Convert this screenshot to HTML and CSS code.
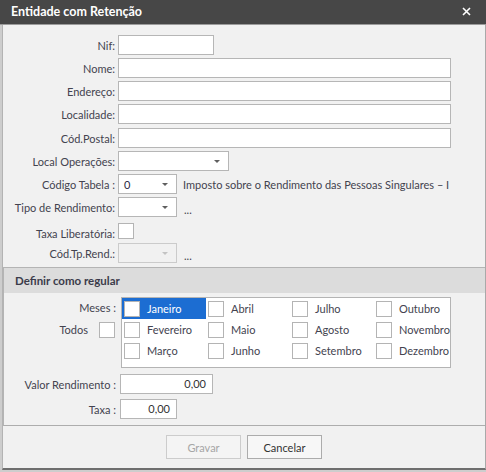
FILE: index.html
```html
<!DOCTYPE html>
<html lang="pt">
<head>
    <meta charset="UTF-8">
    <title>Entidade com Retenção</title>
    <link rel="stylesheet" href="styles.css">
</head>
<body>

    <div class="titlebar">
        <span class="title">Entidade com Retenção</span>
        <svg class="close" width="9" height="9" viewBox="0 0 9 9">
            <path d="M1 1 L8 8 M8 1 L1 8" stroke="#fff" stroke-width="1.6"/>
        </svg>
    </div>

    <div class="frame">
        <div class="fields">
            <div class="row">
                <span class="lbl">Nif:</span>
                <div class="input w-nif"></div>
            </div>
            <div class="row">
                <span class="lbl">Nome:</span>
                <div class="input w-full"></div>
            </div>
            <div class="row">
                <span class="lbl">Endereço:</span>
                <div class="input w-full"></div>
            </div>
            <div class="row row-extra">
                <span class="lbl">Localidade:</span>
                <div class="input w-full"></div>
            </div>
            <div class="row">
                <span class="lbl">Cód.Postal:</span>
                <div class="input w-full"></div>
            </div>
            <div class="row">
                <span class="lbl">Local Operações:</span>
                <div class="input select w-local"><span></span><i class="arrow"></i></div>
            </div>
            <div class="row">
                <span class="lbl">Código Tabela :</span>
                <div class="input select w-small"><span class="val">0</span><i class="arrow"></i></div>
                <span class="after">Imposto sobre o Rendimento das Pessoas Singulares – I</span>
            </div>
            <div class="row">
                <span class="lbl">Tipo de Rendimento:</span>
                <div class="input select w-small"><span></span><i class="arrow"></i></div>
                <span class="after dots">...</span>
            </div>
            <div class="row row-check">
                <span class="lbl">Taxa Liberatória:</span>
                <span class="check"></span>
            </div>
            <div class="row">
                <span class="lbl">Cód.Tp.Rend.:</span>
                <div class="input select w-small disabled"><span></span><i class="arrow"></i></div>
                <span class="after dots">...</span>
            </div>
        </div>

        <div class="group">
            <div class="group-head">Definir como regular</div>
            <div class="group-body">
                <div class="months-row">
                    <div class="months-side">
                        <div class="meses">Meses :</div>
                        <div class="todos"><span>Todos</span><span class="check"></span></div>
                    </div>
                    <div class="months">
                        <div class="month selected"><span class="check"></span>Janeiro</div>
                        <div class="month"><span class="check"></span>Abril</div>
                        <div class="month"><span class="check"></span>Julho</div>
                        <div class="month"><span class="check"></span>Outubro</div>
                        <div class="month"><span class="check"></span>Fevereiro</div>
                        <div class="month"><span class="check"></span>Maio</div>
                        <div class="month"><span class="check"></span>Agosto</div>
                        <div class="month"><span class="check"></span>Novembro</div>
                        <div class="month"><span class="check"></span>Março</div>
                        <div class="month"><span class="check"></span>Junho</div>
                        <div class="month"><span class="check"></span>Setembro</div>
                        <div class="month"><span class="check"></span>Dezembro</div>
                    </div>
                </div>
                <div class="vrow vrow-first">
                    <span class="vlbl">Valor Rendimento :</span>
                    <div class="input num w-valor">0,00</div>
                </div>
                <div class="vrow">
                    <span class="vlbl">Taxa :</span>
                    <div class="input num w-taxa">0,00</div>
                </div>
            </div>
        </div>

        <div class="footer">
            <button class="btn" disabled>Gravar</button>
            <button class="btn">Cancelar</button>
        </div>
    </div>

</body>
</html>
```

FILE: styles.css
```css
* {
    box-sizing: border-box;
}

body {
    margin: 0;
    width: 486px;
    height: 472px;
    overflow: hidden;
    background-color: #cdcdcd;
    font-family: 'Lato', sans-serif;
    font-size: 11px;
    color: #43434f;
}

.titlebar {
    height: 25px;
    background-color: #474747;
    border-bottom: 1px solid #9c9c9c;
    display: flex;
    align-items: center;
    justify-content: space-between;
    padding: 0 15px 1px 11px;
}

.title {
    color: #fff;
    font-weight: bold;
    font-size: 12.5px;
}

.frame {
    margin-left: 2px;
    width: 484px;
    height: 445px;
    background-color: #f1f1f1;
    border-left: 1px solid #b3b3b3;
    border-right: 1px solid #a9a9a9;
    border-bottom: 2px solid #6e6e6e;
}

.fields {
    padding-top: 10px;
}

.row {
    display: flex;
    align-items: center;
    height: 20px;
    margin-bottom: 3px;
}

.row-extra {
    margin-bottom: 4px;
}

.row-check {
    align-items: flex-end;
}

.lbl {
    width: 112px;
    margin-right: 3px;
    text-align: right;
    white-space: nowrap;
}

.input {
    height: 20px;
    background-color: #fff;
    border: 1px solid #b6b6b6;
}

.w-nif { width: 96px; }
.w-full { width: 333px; }
.w-local { width: 111px; }
.w-small { width: 59px; }

.select {
    display: flex;
    align-items: center;
    justify-content: space-between;
    padding: 0 8px 0 5px;
}

.select .val {
    color: #2a2a44;
}

.arrow {
    width: 0;
    height: 0;
    border-left: 3px solid transparent;
    border-right: 3px solid transparent;
    border-top: 3px solid #5f5f5f;
}

.select.disabled {
    background-color: #f1f1f1;
    border-color: #cbcbcb;
}

.select.disabled .arrow {
    border-top-color: #c3c3c3;
}

.after {
    margin-left: 6px;
    white-space: nowrap;
}

.dots {
    margin-left: 7px;
    padding-top: 4px;
}

.check {
    display: inline-block;
    width: 16px;
    height: 16px;
    background-color: #fff;
    border: 1px solid #b4b4b4;
    flex-shrink: 0;
}

.row-check .check {
    margin-bottom: 1px;
}

.group {
    margin-top: 4px;
    border-top: 1px solid #b4b4b4;
    border-left: 1px solid #b4b4b4;
    border-bottom: 1px solid #adadad;
}

.group-head {
    height: 25px;
    background-color: #dcdcdc;
    padding-left: 11px;
    display: flex;
    align-items: center;
    font-weight: bold;
    font-size: 11.5px;
    color: #3b3b4a;
}

.group-body {
    padding: 4px 0 6px 0;
}

.months-row {
    display: flex;
}

.months-side {
    width: 117px;
    padding-top: 1px;
}

.meses {
    height: 21px;
    line-height: 20px;
    text-align: right;
    padding-right: 5px;
}

.todos {
    height: 21px;
    display: flex;
    align-items: center;
    justify-content: flex-end;
    padding-right: 6px;
}

.todos .check {
    margin-left: 11px;
}

.months {
    width: 330px;
    height: 71px;
    background-color: #fff;
    border: 1px solid #b4b4b4;
    display: grid;
    grid-template-columns: 84px 84px 84px 1fr;
    grid-auto-rows: 21px;
    align-content: start;
}

.month {
    display: flex;
    align-items: center;
    padding-left: 2px;
    white-space: nowrap;
}

.month .check {
    margin-right: 7px;
}

.month.selected {
    background-color: #1c6dd2;
    color: #fff;
}

.vrow {
    display: flex;
    align-items: center;
    height: 20px;
    margin-top: 5px;
}

.vrow-first {
    margin-top: 6px;
}

.vlbl {
    width: 112px;
    margin-right: 4px;
    text-align: right;
    white-space: nowrap;
}

.num {
    text-align: right;
    padding-right: 6px;
    line-height: 18px;
    color: #333;
}

.w-valor { width: 93px; }
.w-taxa { width: 57px; }

.footer {
    display: flex;
    justify-content: center;
    gap: 6px;
    padding-top: 9px;
}

.btn {
    width: 75px;
    height: 24px;
    font-family: 'Lato', sans-serif;
    font-size: 11px;
    color: #333;
    background-color: #f7f7f7;
    border: 1px solid #acacac;
    padding: 0;
}

.btn:disabled {
    color: #a6a6a6;
    border-color: #cccccc;
    background-color: #f4f4f4;
}
```
